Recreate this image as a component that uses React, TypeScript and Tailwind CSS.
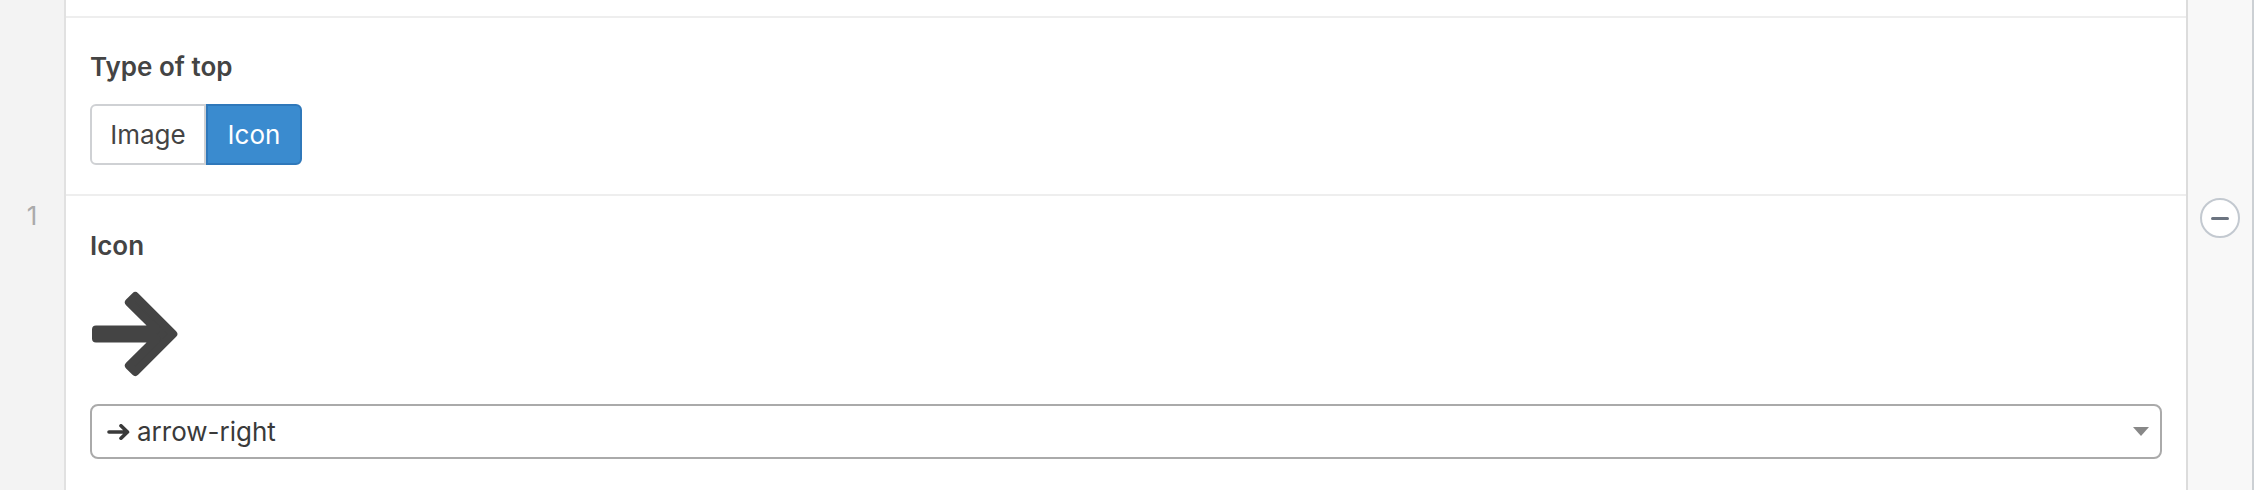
import { useState } from 'react';

const FONT = "font-['Inter','Noto_Sans',sans-serif]";

// outline drawn inset by 4px, then stroked 8px with round joins for the soft corners
function BigArrow() {
  return (
    <svg width="92" height="88" viewBox="88 290 92 88" className="block" aria-hidden="true">
      <polygon
        points="94,329.5 154.2,329.5 126.9,302.4 133.3,296 171.3,334 133.3,372 126.9,365.6 154.2,338.5 94,338.5"
        fill="#444444"
        stroke="#444444"
        strokeWidth="8"
        strokeLinejoin="round"
      />
    </svg>
  );
}

function SmallArrow() {
  return (
    <svg width="24" height="16" viewBox="0 0 24 16" className="block shrink-0" aria-hidden="true">
      <path
        d="M2 8 H20.5 M14 1.8 L20.5 8 L14 14.2"
        fill="none"
        stroke="#3a3a3a"
        strokeWidth="3.6"
        strokeLinecap="round"
        strokeLinejoin="round"
      />
    </svg>
  );
}

export default function App() {
  const [kind, setKind] = useState<'image' | 'icon'>('icon');

  return (
    <div className={`flex h-[490px] w-full overflow-hidden bg-white text-[#444444] ${FONT}`}>
      {/* row handle */}
      <div className="w-[66px] shrink-0 border-r-2 border-[#e1e1e1] bg-[#f3f3f3] pt-[202px] text-center text-[26px] leading-[28px] text-[#aaaaaa]">
        1
      </div>

      {/* fields */}
      <div className="flex min-w-0 flex-1 flex-col">
        <div className="h-[18px] shrink-0 border-b-2 border-[#eeeeee]" />

        <div className="h-[178px] shrink-0 border-b-2 border-[#eeeeee] px-6 pt-[31px]">
          <p className="text-[26px] font-semibold leading-[36px]">Type of top</p>
          <div className="mt-[19px] flex h-[61px] w-fit">
            <button
              type="button"
              onClick={() => setKind('image')}
              className={`flex h-full w-[116px] items-center justify-center rounded-l-[6px] border-2 text-[26px] ${
                kind === 'image'
                  ? 'border-[#2f78ba] bg-[#3a8bcf] text-white'
                  : 'border-[#cfd1d4] bg-white text-[#444444]'
              }`}
            >
              Image
            </button>
            <button
              type="button"
              onClick={() => setKind('icon')}
              className={`flex h-full w-[96px] items-center justify-center rounded-r-[6px] border-2 text-[26px] ${
                kind === 'icon'
                  ? 'border-[#2f78ba] bg-[#3a8bcf] text-white'
                  : 'border-[#cfd1d4] bg-white text-[#444444]'
              }`}
            >
              Icon
            </button>
          </div>
        </div>

        <div className="flex-1 px-6 pt-[32px]">
          <p className="text-[26px] font-semibold leading-[36px]">Icon</p>
          <div className="mt-[26px]">
            <BigArrow />
          </div>
          <div className="mt-[26px] flex h-[55px] items-center rounded-[8px] border-2 border-[#aaaaaa] bg-white pl-[15px] pr-[11px]">
            <SmallArrow />
            <span className="ml-[6px] flex-1 text-[26px] leading-none text-[#3a3a3a]">arrow-right</span>
            <svg width="16" height="10" viewBox="0 0 16 10" className="block" aria-hidden="true">
              <polygon points="0,0 16,0 8,9" fill="#888888" />
            </svg>
          </div>
        </div>
      </div>

      {/* row actions */}
      <div className="flex w-[68px] shrink-0 justify-center border-l-2 border-r-2 border-l-[#dcdcdc] border-r-[#ccd0d4] bg-[#f8f8f8] pt-[198px]">
        <button
          type="button"
          className="flex h-[40px] w-[40px] items-center justify-center rounded-full border-2 border-[#c3c9d0] bg-white"
        >
          <span className="block h-[3px] w-[18px] rounded-full bg-[#6b7480]" />
        </button>
      </div>
    </div>
  );
}
